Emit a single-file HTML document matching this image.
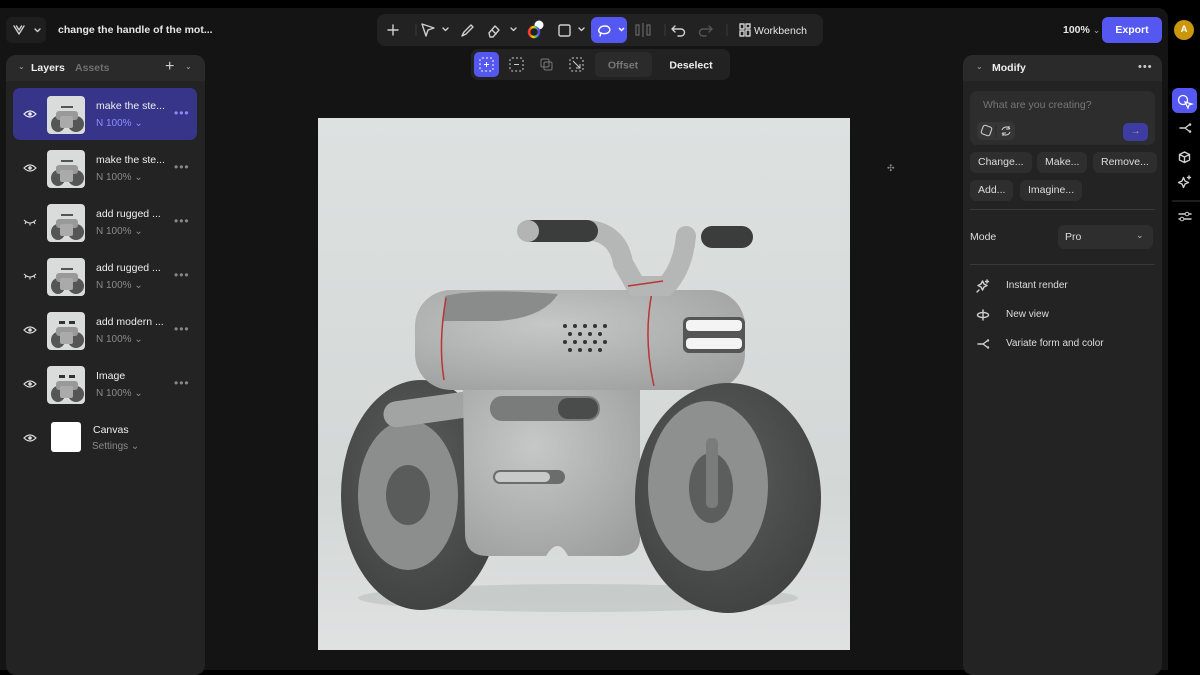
<!DOCTYPE html>
<html><head><meta charset="utf-8"><style>
*{margin:0;padding:0;box-sizing:border-box}
body{width:1200px;height:670px;background:#000;font-family:"Liberation Sans",sans-serif;position:relative;overflow:hidden;color:#e8e8e8}
.app{position:absolute;left:0;top:8px;width:1168px;height:662px;background:#141414;border-top-right-radius:10px}
.abs{position:absolute}
.panel{background:#232323;border-radius:10px}
.t{font-size:11px}
.icon{stroke:#cfcfcf;fill:none;stroke-width:1.4;stroke-linecap:round;stroke-linejoin:round}
.row{position:absolute;left:13px;width:184px;height:52px;border-radius:7px}
.row .thumb{position:absolute;left:34px;top:8px;width:38px;height:38px;border-radius:4px;background:#d9dcdb;overflow:hidden}
.row .name{position:absolute;left:83px;top:12px;font-size:10.5px;color:#eee}
.row .sub{position:absolute;left:83px;top:30px;font-size:10px;color:#8a8a8a}
.row .dots{position:absolute;left:161px;top:18px;font-size:12px;color:#888;letter-spacing:1px}
.row .eye{position:absolute;left:10px;top:20px}
.chip{position:absolute;height:21px;background:#2e2e2e;border-radius:6px;font-size:10.5px;color:#ddd;line-height:21px;padding:0 8px}
.menu{position:absolute;left:1006px;font-size:10px;color:#ddd}
</style></head><body>
<div class="app"></div>

<!-- top-left logo -->
<div class="abs" style="left:6px;top:17px;width:40px;height:26px;background:#1e1e1e;border-radius:6px"></div>
<svg class="abs" style="left:12px;top:23px" width="32" height="14"><path class="icon" d="M2 3 L7 11 L12 3 M4.5 3 L7 7 L9.5 3"/><path class="icon" d="M23 6 l2.5 2.5 l2.5 -2.5"/></svg>
<div class="abs" style="left:58px;top:24px;font-size:10.5px;font-weight:bold;color:#e6e6e6">change the handle of the mot...</div>

<!-- toolbar -->
<div class="abs" style="left:377px;top:14px;width:446px;height:32px;background:#222;border-radius:8px"></div>
<svg class="abs" style="left:377px;top:14px" width="446" height="32">
<path class="icon" d="M11 16 h10 M16 11 v10"/>
<line x1="39" y1="10" x2="39" y2="22" stroke="#3a3a3a"/>
<path class="icon" d="M45 10 L57 14 L51 16 L49 22 Z"/>
<path class="icon" d="M66 14 l2.5 2.5 l2.5 -2.5"/>
<path class="icon" d="M85 22 l2 -4 l7 -7 l2 2 l-7 7 z"/>
<path class="icon" d="M112 19 l6 -7 l4 4 l-6 7 h-3 z M115 16 l4 4"/>
<path class="icon" d="M134 14 l2.5 2.5 l2.5 -2.5"/>
<circle cx="162" cy="11" r="4.5" fill="#fff"/>
<circle cx="157" cy="18" r="5" fill="none" stroke="url(#g)" stroke-width="2.5"/>
<defs><linearGradient id="g"><stop offset="0" stop-color="#f33"/><stop offset=".4" stop-color="#fc0"/><stop offset=".7" stop-color="#3c6"/><stop offset="1" stop-color="#63f"/></linearGradient></defs>
<rect class="icon" x="182" y="11" width="11" height="11" rx="1.5"/>
<path class="icon" d="M202 14 l2.5 2.5 l2.5 -2.5"/>
<rect x="214" y="3" width="36" height="26" rx="6" fill="#5457f0"/>
<path d="M223 19 c-3 -3 0 -7 5 -7 c4 0 6 3 4 6 c-2 2 -6 2 -8 1 l-1 3" stroke="#fff" fill="none" stroke-width="1.4" stroke-linecap="round"/>
<path d="M242 14 l2.5 2.5 l2.5 -2.5" stroke="#fff" fill="none" stroke-width="1.4"/>
<path d="M262 11 v10 h-3 v-10 z M266 9 v14 M270 11 v10 h3 v-10z" stroke="#666" fill="none" stroke-width="1.2"/>
<line x1="288" y1="10" x2="288" y2="22" stroke="#3a3a3a"/>
<path class="icon" d="M295 15 h9 a3.5 3.5 0 0 1 0 7 h-3 M298 12 l-3 3 l3 3"/>
<path d="M335 15 h-9 a3.5 3.5 0 0 0 0 7 h3 M332 12 l3 3 l-3 3" stroke="#555" fill="none" stroke-width="1.4" stroke-linecap="round"/>
<line x1="350" y1="10" x2="350" y2="22" stroke="#3a3a3a"/>
<path class="icon" d="M363 10 h4 v5 h-4z M363 17 h4 v5 h-4z M369 10 h4 v4 h-4z M369 16 h4 v6 h-4z" stroke-width="1.1"/>
<text x="377" y="20" font-size="10.5" fill="#e6e6e6" font-family="Liberation Sans">Workbench</text>
</svg>

<!-- selection toolbar -->
<div class="abs" style="left:471px;top:49px;width:259px;height:31px;background:#222;border-radius:7px"></div>
<svg class="abs" style="left:471px;top:49px" width="259" height="31">
<rect x="3" y="3" width="25" height="25" rx="5" fill="#5457f0"/>
<rect x="9" y="9" width="13" height="13" rx="2" fill="none" stroke="#fff" stroke-dasharray="2 2"/><path d="M15.5 13 v5 M13 15.5 h5" stroke="#fff"/>
<rect x="39" y="9" width="13" height="13" rx="2" fill="none" stroke="#ccc" stroke-dasharray="2 2"/><path d="M43 15.5 h5" stroke="#ccc"/>
<rect x="70" y="10" width="8" height="8" rx="1.5" fill="none" stroke="#777"/><rect x="73" y="13" width="8" height="8" rx="1.5" fill="none" stroke="#777"/>
<rect x="99" y="9" width="13" height="13" rx="2" fill="none" stroke="#ccc" stroke-dasharray="2 2"/><path d="M102 12 l7 7 M109 15 v4 h-4" stroke="#ccc" fill="none"/>
<rect x="124" y="3" width="57" height="25" rx="5" fill="#2b2b2b"/>
<text x="152" y="19.5" text-anchor="middle" font-size="10.5" font-weight="bold" fill="#777" font-family="Liberation Sans">Offset</text>
<text x="220" y="19.5" text-anchor="middle" font-size="10.5" font-weight="bold" fill="#eee" font-family="Liberation Sans">Deselect</text>
</svg>

<!-- right top -->
<div class="abs" style="left:1063px;top:24px;font-size:10.5px;font-weight:bold;color:#e6e6e6">100% <span style="font-weight:normal;color:#aaa;font-size:9px">⌄</span></div>
<div class="abs" style="left:1102px;top:17px;width:60px;height:26px;background:#5457f0;border-radius:6px;font-size:10.5px;font-weight:bold;text-align:center;line-height:26px;color:#fff">Export</div>
<div class="abs" style="left:1174px;top:20px;width:20px;height:20px;border-radius:50%;background:#c9960c;font-size:9.5px;font-weight:bold;color:#fff;text-align:center;line-height:20px">A</div>

<!-- right strip icons -->
<div class="abs" style="left:1172px;top:88px;width:25px;height:25px;border-radius:6px;background:#5457f0"></div>
<svg class="abs" style="left:1172px;top:88px" width="28" height="160">
<circle cx="11" cy="12" r="4.5" fill="none" stroke="#fff" stroke-width="1.3"/><path d="M13 14 l3 6 l1 -3 l3 -1 z" fill="none" stroke="#fff" stroke-width="1.2"/>
<path class="icon" d="M8 40 h5 M13 40 l4 -3 M13 40 l4 3" stroke-width="1.1"/><circle cx="18" cy="36.5" r="1.3" fill="#ccc"/><circle cx="18" cy="43.5" r="1.3" fill="#ccc"/>
<path class="icon" d="M12.5 64 l5 2.5 v5.5 l-5 2.5 l-5 -2.5 v-5.5 z M7.5 66.5 l5 2.5 l5 -2.5 M12.5 69 v5.5" stroke-width="1.1"/>
<path class="icon" d="M10 93 l1.5 -3.5 l1.5 3.5 l3.5 1.5 l-3.5 1.5 l-1.5 3.5 l-1.5 -3.5 l-3.5 -1.5 z M17 88 v3 M15.5 89.5 h3" stroke-width="1.1"/>
<line x1="0" y1="113" x2="28" y2="113" stroke="#3a3a3a"/>
<path class="icon" d="M7 126 h12 M7 131 h12" stroke-width="1.1"/><circle cx="15" cy="126" r="1.8" fill="#000" stroke="#ccc"/><circle cx="10" cy="131" r="1.8" fill="#000" stroke="#ccc"/>
</svg>

<!-- left panel -->
<div class="abs panel" style="left:6px;top:55px;width:199px;height:620px"></div>
<div class="abs" style="left:6px;top:55px;width:199px;height:26px;background:#2a2a2a;border-radius:10px 10px 0 0"></div>
<div class="abs" style="left:18px;top:62px;font-size:8px;color:#aaa">⌄</div>
<div class="abs" style="left:31px;top:62px;font-size:10.5px;font-weight:bold;color:#eee">Layers</div>
<div class="abs" style="left:75px;top:62px;font-size:10.5px;font-weight:bold;color:#6f6f6f">Assets</div>
<div class="abs" style="left:165px;top:58px;font-size:16px;color:#ccc">+</div>
<div class="abs" style="left:185px;top:62px;font-size:8px;color:#aaa">⌄</div>

<div class="row" style="top:88px;background:#37358a">
<svg class="eye" width="14" height="12"><path d="M1 6 Q7 0 13 6 Q7 12 1 6z" fill="none" stroke="#eee" stroke-width="1.2"/><circle cx="7" cy="6" r="1.8" fill="#eee"/></svg>
<div class="thumb"><svg width="38" height="38"><ellipse cx="11" cy="28" rx="7" ry="8" fill="#555"/><ellipse cx="29" cy="28" rx="8" ry="8" fill="#555"/><rect x="9" y="15" width="22" height="9" rx="3" fill="#999"/><rect x="13" y="20" width="13" height="12" rx="2" fill="#aaa"/><rect x="14" y="10" width="12" height="2" fill="#555"/></svg></div>
<div class="name">make the ste...</div><div class="sub" style="color:#8b8dff">N 100% ⌄</div><div class="dots" style="color:#8b8dff">•••</div></div>

<div class="row" style="top:142px">
<svg class="eye" width="14" height="12"><path d="M1 6 Q7 0 13 6 Q7 12 1 6z" fill="none" stroke="#ddd" stroke-width="1.2"/><circle cx="7" cy="6" r="1.8" fill="#ddd"/></svg>
<div class="thumb"><svg width="38" height="38"><ellipse cx="11" cy="28" rx="7" ry="8" fill="#555"/><ellipse cx="29" cy="28" rx="8" ry="8" fill="#555"/><rect x="9" y="15" width="22" height="9" rx="3" fill="#999"/><rect x="13" y="20" width="13" height="12" rx="2" fill="#aaa"/><rect x="14" y="10" width="12" height="2" fill="#555"/></svg></div>
<div class="name">make the ste...</div><div class="sub">N 100% ⌄</div><div class="dots">•••</div></div>

<div class="row" style="top:196px">
<svg class="eye" width="14" height="12"><path d="M1 4 Q7 10 13 4 M3 6 l-1 2 M7 7.5 v2 M11 6 l1 2" fill="none" stroke="#ddd" stroke-width="1.1"/></svg>
<div class="thumb"><svg width="38" height="38"><ellipse cx="11" cy="28" rx="7" ry="8" fill="#555"/><ellipse cx="29" cy="28" rx="8" ry="8" fill="#555"/><rect x="9" y="15" width="22" height="9" rx="3" fill="#999"/><rect x="13" y="20" width="13" height="12" rx="2" fill="#aaa"/><rect x="14" y="10" width="12" height="2" fill="#555"/></svg></div>
<div class="name">add rugged ...</div><div class="sub">N 100% ⌄</div><div class="dots">•••</div></div>

<div class="row" style="top:250px">
<svg class="eye" width="14" height="12"><path d="M1 4 Q7 10 13 4 M3 6 l-1 2 M7 7.5 v2 M11 6 l1 2" fill="none" stroke="#ddd" stroke-width="1.1"/></svg>
<div class="thumb"><svg width="38" height="38"><ellipse cx="11" cy="28" rx="7" ry="8" fill="#555"/><ellipse cx="29" cy="28" rx="8" ry="8" fill="#555"/><rect x="9" y="15" width="22" height="9" rx="3" fill="#999"/><rect x="13" y="20" width="13" height="12" rx="2" fill="#aaa"/><rect x="14" y="10" width="12" height="2" fill="#555"/></svg></div>
<div class="name">add rugged ...</div><div class="sub">N 100% ⌄</div><div class="dots">•••</div></div>

<div class="row" style="top:304px">
<svg class="eye" width="14" height="12"><path d="M1 6 Q7 0 13 6 Q7 12 1 6z" fill="none" stroke="#ddd" stroke-width="1.2"/><circle cx="7" cy="6" r="1.8" fill="#ddd"/></svg>
<div class="thumb"><svg width="38" height="38"><ellipse cx="11" cy="28" rx="7" ry="8" fill="#555"/><ellipse cx="29" cy="28" rx="8" ry="8" fill="#555"/><rect x="9" y="15" width="22" height="9" rx="3" fill="#999"/><rect x="13" y="20" width="13" height="12" rx="2" fill="#aaa"/><rect x="12" y="9" width="6" height="3" fill="#333"/><rect x="22" y="9" width="6" height="3" fill="#333"/></svg></div>
<div class="name">add modern ...</div><div class="sub">N 100% ⌄</div><div class="dots">•••</div></div>

<div class="row" style="top:358px">
<svg class="eye" width="14" height="12"><path d="M1 6 Q7 0 13 6 Q7 12 1 6z" fill="none" stroke="#ddd" stroke-width="1.2"/><circle cx="7" cy="6" r="1.8" fill="#ddd"/></svg>
<div class="thumb"><svg width="38" height="38"><ellipse cx="11" cy="28" rx="7" ry="8" fill="#555"/><ellipse cx="29" cy="28" rx="8" ry="8" fill="#555"/><rect x="9" y="15" width="22" height="9" rx="3" fill="#999"/><rect x="13" y="20" width="13" height="12" rx="2" fill="#aaa"/><rect x="12" y="9" width="6" height="3" fill="#333"/><rect x="22" y="9" width="6" height="3" fill="#333"/></svg></div>
<div class="name">Image</div><div class="sub">N 100% ⌄</div><div class="dots">•••</div></div>

<div class="row" style="top:412px">
<svg class="eye" width="14" height="12"><path d="M1 6 Q7 0 13 6 Q7 12 1 6z" fill="none" stroke="#ddd" stroke-width="1.2"/><circle cx="7" cy="6" r="1.8" fill="#ddd"/></svg>
<div style="position:absolute;left:38px;top:10px;width:30px;height:30px;background:#fff;border-radius:3px"></div>
<div class="name" style="left:80px;top:12px">Canvas</div><div class="sub" style="left:79px;top:29px">Settings ⌄</div></div>

<!-- canvas image -->
<div class="abs" style="left:318px;top:118px;width:532px;height:532px;background:linear-gradient(#dde1e0,#d3d7d6 70%,#dfe2e1)"></div>
<svg class="abs" style="left:318px;top:118px" width="532" height="532">
<defs><radialGradient id="bd" cx=".4" cy=".35" r=".8"><stop offset="0" stop-color="#c6c8c7"/><stop offset="1" stop-color="#9c9e9d"/></radialGradient>
<radialGradient id="tr" cx=".45" cy=".4" r=".7"><stop offset="0" stop-color="#5c5e5e"/><stop offset="1" stop-color="#3d3f3f"/></radialGradient></defs>
<ellipse cx="260" cy="480" rx="220" ry="14" fill="#bfc3c2" opacity=".7"/>
<ellipse cx="103" cy="377" rx="80" ry="115" fill="url(#tr)"/>
<ellipse cx="90" cy="377" rx="50" ry="75" fill="#8c8e8d"/>
<ellipse cx="90" cy="377" rx="22" ry="30" fill="#5a5c5c"/>
<rect x="65" y="276" width="130" height="26" rx="13" fill="#a2a4a3" transform="rotate(-8 130 289)"/>
<!-- lower body -->
<path d="M145 269 H322 V420 Q322 438 300 438 H250 Q240 418 228 438 H170 Q147 438 147 415 Z" fill="url(#bd)"/>
<!-- upper body -->
<rect x="97" y="172" width="330" height="100" rx="36" fill="url(#bd)"/>
<path d="M127 178 Q160 170 240 176 Q225 200 180 203 H125 Z" fill="#8a8c8b"/>
<path d="M128 180 Q120 225 126 262" stroke="#b33" stroke-width="1.5" fill="none"/>
<path d="M334 174 Q325 220 336 268" stroke="#b33" stroke-width="1.5" fill="none"/>
<!-- handlebar -->
<path d="M270 112 Q300 115 305 145 L318 168 L348 168 Q365 150 368 118" stroke="#b5b7b6" stroke-width="20" fill="none" stroke-linecap="round"/>
<rect x="200" y="102" width="80" height="22" rx="11" fill="#3b3d3d"/>
<ellipse cx="210" cy="113" rx="11" ry="11" fill="#b3b5b4"/>
<rect x="383" y="108" width="52" height="22" rx="11" fill="#3b3d3d"/>
<path d="M310 168 l35 -5" stroke="#b33" stroke-width="1.5"/>
<!-- grille -->
<g fill="#333"><circle cx="247" cy="208" r="2"/><circle cx="257" cy="208" r="2"/><circle cx="267" cy="208" r="2"/><circle cx="277" cy="208" r="2"/><circle cx="287" cy="208" r="2"/><circle cx="252" cy="216" r="2"/><circle cx="262" cy="216" r="2"/><circle cx="272" cy="216" r="2"/><circle cx="282" cy="216" r="2"/><circle cx="247" cy="224" r="2"/><circle cx="257" cy="224" r="2"/><circle cx="267" cy="224" r="2"/><circle cx="277" cy="224" r="2"/><circle cx="287" cy="224" r="2"/><circle cx="252" cy="232" r="2"/><circle cx="262" cy="232" r="2"/><circle cx="272" cy="232" r="2"/><circle cx="282" cy="232" r="2"/></g>
<!-- headlight -->
<rect x="365" y="199" width="62" height="36" rx="6" fill="#555"/>
<rect x="368" y="202" width="56" height="11" rx="4" fill="#f4f4f4"/>
<rect x="368" y="220" width="56" height="11" rx="4" fill="#f4f4f4"/>
<!-- vent -->
<rect x="172" y="278" width="110" height="25" rx="12" fill="#7a7c7b"/>
<rect x="240" y="280" width="40" height="21" rx="10" fill="#4a4c4c"/>
<rect x="175" y="352" width="72" height="14" rx="7" fill="#6b6d6c"/><rect x="177" y="354" width="55" height="10" rx="5" fill="#c8cac9"/>
<!-- front wheel -->
<ellipse cx="410" cy="380" rx="93" ry="115" fill="url(#tr)"/>
<ellipse cx="390" cy="368" rx="60" ry="85" fill="#8e908f"/>
<ellipse cx="393" cy="370" rx="22" ry="35" fill="#5c5e5e"/>
<rect x="388" y="320" width="12" height="70" rx="5" fill="#7a7c7b"/>
</svg>

<!-- crosshair -->
<div class="abs" style="left:887px;top:163px;font-size:9px;color:#888">✣</div>

<!-- right panel -->
<div class="abs panel" style="left:963px;top:55px;width:199px;height:620px"></div>
<div class="abs" style="left:963px;top:55px;width:199px;height:26px;background:#2a2a2a;border-radius:10px 10px 0 0"></div>
<div class="abs" style="left:976px;top:62px;font-size:8px;color:#aaa">⌄</div>
<div class="abs" style="left:992px;top:62px;font-size:10.5px;font-weight:bold;color:#eee">Modify</div>
<div class="abs" style="left:1138px;top:61px;font-size:11px;color:#ccc;letter-spacing:1px">•••</div>

<div class="abs" style="left:970px;top:91px;width:185px;height:54px;background:#2d2d2d;border-radius:7px"></div>
<div class="abs" style="left:983px;top:99px;font-size:10.5px;color:#777">What are you creating?</div>
<div class="abs" style="left:977px;top:122px;width:38px;height:18px;background:#363636;border-radius:5px"></div>
<svg class="abs" style="left:977px;top:122px" width="38" height="18"><rect x="5" y="4" width="9" height="9" rx="2" transform="rotate(20 9.5 8.5)" fill="none" stroke="#ccc" stroke-width="1.1"/><line x1="19" y1="3" x2="19" y2="15" stroke="#2a2a2a"/><path d="M25 8 a4.5 4.5 0 0 1 8 -1 M33 10 a4.5 4.5 0 0 1 -8 1 M32 4 v3 h-3 M26 14 v-3 h3" fill="none" stroke="#ccc" stroke-width="1.1"/></svg>
<div class="abs" style="left:1123px;top:123px;width:25px;height:18px;background:#3d3ca0;border-radius:5px;color:#aaa;text-align:center;font-size:10px;line-height:18px">→</div>

<div class="chip" style="left:970px;top:152px">Change...</div>
<div class="chip" style="left:1037px;top:152px">Make...</div>
<div class="chip" style="left:1093px;top:152px">Remove...</div>
<div class="chip" style="left:970px;top:180px">Add...</div>
<div class="chip" style="left:1020px;top:180px">Imagine...</div>
<div class="abs" style="left:970px;top:209px;width:185px;height:1px;background:#393939"></div>
<div class="abs" style="left:970px;top:231px;font-size:10.5px;color:#ddd">Mode</div>
<div class="abs" style="left:1058px;top:225px;width:95px;height:24px;background:#2e2e2e;border-radius:6px"></div>
<div class="abs" style="left:1065px;top:231px;font-size:10.5px;color:#ddd">Pro</div>
<div class="abs" style="left:1136px;top:230px;font-size:9px;color:#bbb">⌄</div>
<div class="abs" style="left:970px;top:264px;width:185px;height:1px;background:#393939"></div>

<svg class="abs" style="left:975px;top:277px" width="20" height="80">
<path class="icon" stroke-width="1" d="M6 7 l1.5 -3 l1.5 3 l3 1.5 l-3 1.5 l-1.5 3 l-1.5 -3 l-3 -1.5 z M4 13 l-2 2 M12 3 v3 M10.5 4.5 h3"/>
<ellipse cx="8" cy="38" rx="5.5" ry="2.5" class="icon" stroke-width="1"/><path class="icon" stroke-width="1" d="M8 33 v10"/>
<path class="icon" stroke-width="1" d="M3 67 h5 M8 67 l4 -3 M8 67 l4 3"/><circle cx="13" cy="63.5" r="1.2" fill="#ccc"/><circle cx="13" cy="70.5" r="1.2" fill="#ccc"/>
</svg>
<div class="menu" style="top:280px">Instant render</div>
<div class="menu" style="top:309px">New view</div>
<div class="menu" style="top:338px">Variate form and color</div>
</body></html>
